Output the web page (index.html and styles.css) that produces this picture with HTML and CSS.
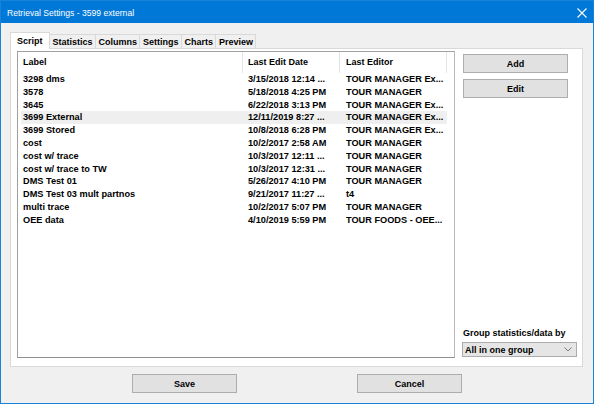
FILE: index.html
```html
<!DOCTYPE html>
<html>
<head>
  <link rel="stylesheet" href="styles.css">
</head>
<body>
  <div class="window">
    <div class="titlebar">
      <span class="title">Retrieval Settings - 3599 external</span>
      <svg class="close" width="10" height="10" viewBox="0 0 10 10">
        <path d="M0.5 0.5 L9.5 9.5 M9.5 0.5 L0.5 9.5" stroke="#fff" stroke-width="1.1"/>
      </svg>
    </div>

    <div class="client">
      <!-- tab headers -->
      <div class="tabs">
        <div class="tab active">Script</div>
        <div class="tab">Statistics</div>
        <div class="tab">Columns</div>
        <div class="tab">Settings</div>
        <div class="tab">Charts</div>
        <div class="tab">Preview</div>
      </div>

      <div class="page">
        <div class="list">
          <div class="list-head">
            <div class="col c1">Label</div>
            <div class="col c2">Last Edit Date</div>
            <div class="col c3">Last Editor</div>
          </div>
          <div class="list-body">
            <div class="row"><span class="c1">3298 dms</span><span class="c2">3/15/2018 12:14 ...</span><span class="c3">TOUR MANAGER Ex...</span></div>
            <div class="row"><span class="c1">3578</span><span class="c2">5/18/2018 4:25 PM</span><span class="c3">TOUR MANAGER</span></div>
            <div class="row"><span class="c1">3645</span><span class="c2">6/22/2018 3:13 PM</span><span class="c3">TOUR MANAGER Ex...</span></div>
            <div class="row selected"><span class="c1">3699 External</span><span class="c2">12/11/2019 8:27 ...</span><span class="c3">TOUR MANAGER Ex...</span></div>
            <div class="row"><span class="c1">3699 Stored</span><span class="c2">10/8/2018 6:28 PM</span><span class="c3">TOUR MANAGER Ex...</span></div>
            <div class="row"><span class="c1">cost</span><span class="c2">10/2/2017 2:58 AM</span><span class="c3">TOUR MANAGER</span></div>
            <div class="row"><span class="c1">cost w/ trace</span><span class="c2">10/3/2017 12:11 ...</span><span class="c3">TOUR MANAGER</span></div>
            <div class="row"><span class="c1">cost w/ trace to TW</span><span class="c2">10/3/2017 12:31 ...</span><span class="c3">TOUR MANAGER</span></div>
            <div class="row"><span class="c1">DMS Test 01</span><span class="c2">5/26/2017 4:10 PM</span><span class="c3">TOUR MANAGER</span></div>
            <div class="row"><span class="c1">DMS Test 03 mult partnos</span><span class="c2">9/21/2017 11:27 ...</span><span class="c3">t4</span></div>
            <div class="row"><span class="c1">multi trace</span><span class="c2">10/2/2017 5:07 PM</span><span class="c3">TOUR MANAGER</span></div>
            <div class="row"><span class="c1">OEE data</span><span class="c2">4/10/2019 5:59 PM</span><span class="c3">TOUR FOODS - OEE...</span></div>
          </div>
        </div>

        <div class="side">
          <button class="btn side-btn">Add</button>
          <button class="btn side-btn">Edit</button>
          <div class="grow"></div>
          <div class="group-label">Group statistics/data by</div>
          <div class="combo">
            <span>All in one group</span>
            <svg width="8" height="5" viewBox="0 0 8 5">
              <path d="M0.5 0.5 L4 4 L7.5 0.5" fill="none" stroke="#7a7a7a" stroke-width="1"/>
            </svg>
          </div>
        </div>
      </div>

      <div class="footer">
        <button class="btn foot-btn">Save</button>
        <button class="btn foot-btn">Cancel</button>
      </div>
    </div>
  </div>
</body>
</html>
```

FILE: styles.css
```css
body {
  margin: 0;
  font-family: 'Liberation Sans', Arial, sans-serif;
  font-size: 9px;
  font-weight: bold;
  color: #000;
}

.window {
  width: 594px;
  height: 404px;
  box-sizing: border-box;
  border: 1px solid #1883d7;
  background: #f0f0f0;
  display: flex;
  flex-direction: column;
}

.titlebar {
  height: 22px;
  background: #0078d7;
  display: flex;
  align-items: center;
  justify-content: space-between;
  padding: 0 6px 0 6px;
  flex-shrink: 0;
}

.title {
  color: #fff;
  font-weight: normal;
  font-size: 8.6px;
  margin-top: 1px;
}

.close {
  margin-top: 1px;
}

.client {
  flex: 1;
  padding: 9px 10px 0 9px;
  display: flex;
  flex-direction: column;
}

/* tabs */
.tabs {
  height: 16px;
  display: flex;
  align-items: flex-end;
}

.tab {
  height: 14px;
  line-height: 14px;
  box-sizing: border-box;
  padding: 0 2px 0 3px;
  border: 1px solid #d9d9d9;
  border-bottom: none;
  border-left: none;
  background: #f0f0f0;
  white-space: nowrap;
}

.tab.active {
  height: 17px;
  line-height: 16px;
  margin-bottom: -1px;
  padding: 0 6px 0 6px;
  background: #fff;
  border-left: 1px solid #d9d9d9;
  position: relative;
  z-index: 1;
}

/* tab page */
.page {
  height: 319px;
  box-sizing: border-box;
  background: #fff;
  border: 1px solid #d9d9d9;
  padding: 2px 0 0 6px;
  display: flex;
  gap: 7px;
}

.list {
  width: 438px;
  height: 307px;
  box-sizing: border-box;
  border: 1px solid #a9a9a9;
  border-color: #a0a0a0 #b9b9b9 #8f8f8f #a0a0a0;
  overflow: hidden;
}

.list-head {
  height: 21px;
  display: flex;
}

.list-head .col {
  box-sizing: border-box;
  border-right: 1px solid #e5e5e5;
  line-height: 21px;
  padding-left: 5px;
  white-space: nowrap;
}

.list-head .c1 { width: 225px; }
.list-head .c2 { width: 97px; }
.list-head .c3 { width: 107px; padding-left: 6px; }

.row {
  display: flex;
  height: 12.8px;
  line-height: 12.8px;
  margin-left: 3px;
  width: 426px;
  white-space: nowrap;
  font-size: 9.2px;
}

.row.selected {
  background: #efefef;
}

.row span {
  box-sizing: border-box;
  overflow: hidden;
}

.row .c1 { width: 222px; padding-left: 2px; }
.row .c2 { width: 97px; padding-left: 5px; }
.row .c3 { width: 107px; padding-left: 6px; }

/* right column */
.side {
  width: 116px;
  display: flex;
  flex-direction: column;
  padding-top: 3px;
  padding-bottom: 9px;
}

.btn {
  font: inherit;
  color: #000;
  height: 19px;
  box-sizing: border-box;
  background: #e1e1e1;
  border: 1px solid #adadad;
  padding: 0;
  border-radius: 0;
}

.side-btn {
  width: 105px;
  margin-left: 1px;
  margin-bottom: 6px;
}

.grow {
  flex: 1;
}

.group-label {
  line-height: 12px;
  padding-left: 1px;
  margin-bottom: 3px;
}

.combo {
  height: 15px;
  width: 115px;
  box-sizing: border-box;
  background: #e5e5e5;
  border: 1px solid #acacac;
  display: flex;
  align-items: center;
  justify-content: space-between;
  padding: 0 4px 0 2px;
}

/* bottom buttons */
.footer {
  display: flex;
  gap: 120px;
  padding: 7px 0 0 122px;
}

.foot-btn {
  width: 105px;
}
```
